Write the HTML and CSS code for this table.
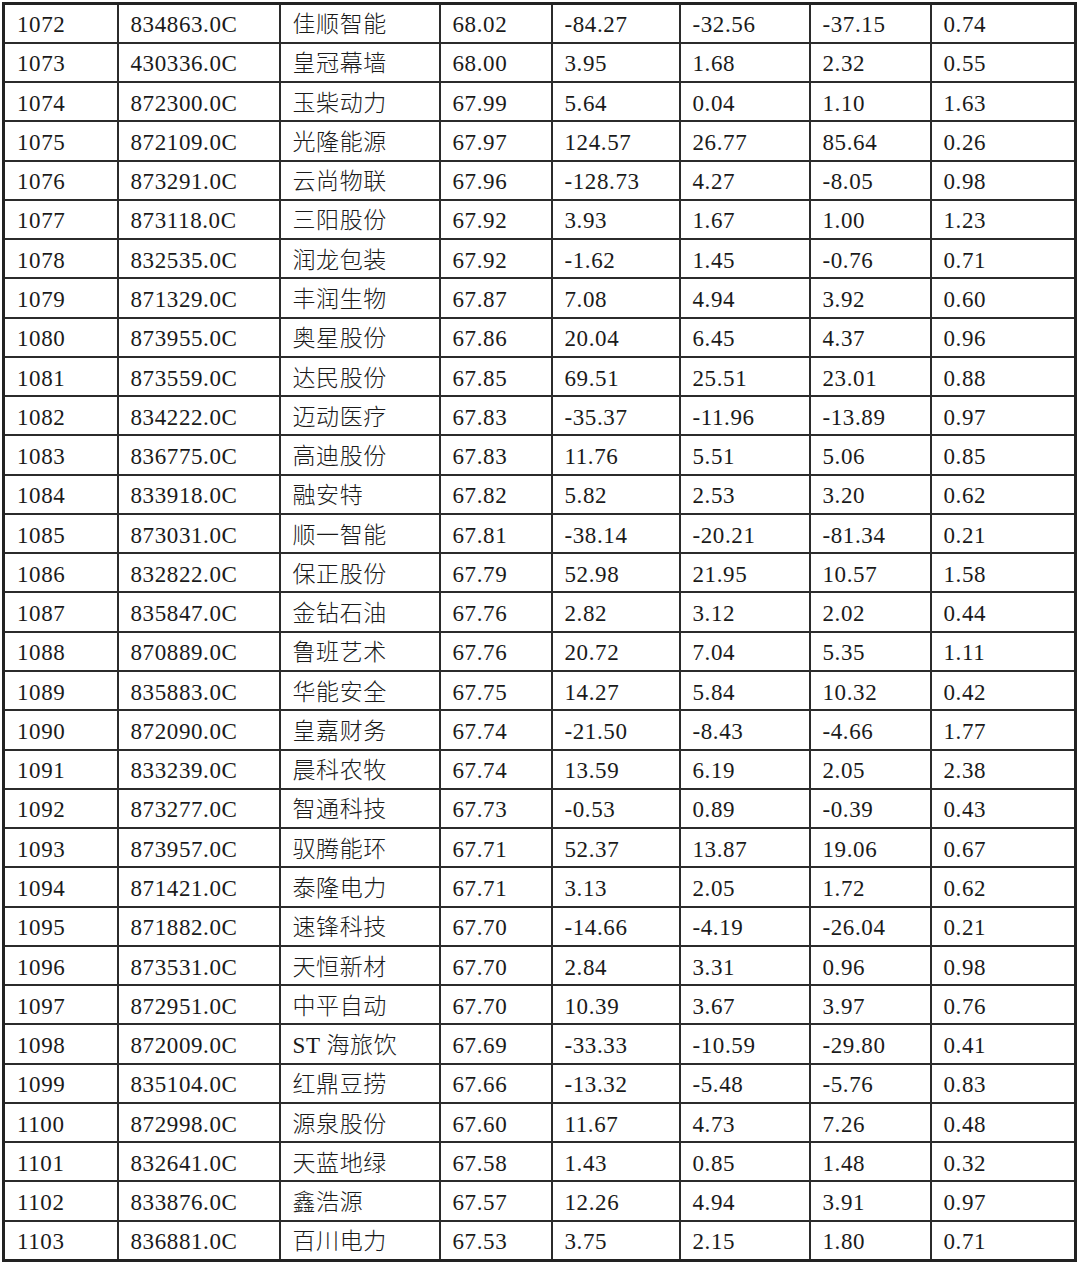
FILE: index.html
```html
<!DOCTYPE html>
<html lang="zh-CN">
<head>
<meta charset="utf-8">
<title>表格</title>
<link rel="stylesheet" href="styles.css">
</head>
<body>
<table class="grid">
<colgroup>
<col class="c-rank"><col class="c-code"><col class="c-name"><col class="c-score"><col class="c-a"><col class="c-b"><col class="c-c"><col class="c-d">
</colgroup>
<tbody>
<tr><td>1072</td><td>834863.0C</td><td>佳顺智能</td><td>68.02</td><td>-84.27</td><td>-32.56</td><td>-37.15</td><td>0.74</td></tr>
<tr><td>1073</td><td>430336.0C</td><td>皇冠幕墙</td><td>68.00</td><td>3.95</td><td>1.68</td><td>2.32</td><td>0.55</td></tr>
<tr><td>1074</td><td>872300.0C</td><td>玉柴动力</td><td>67.99</td><td>5.64</td><td>0.04</td><td>1.10</td><td>1.63</td></tr>
<tr><td>1075</td><td>872109.0C</td><td>光隆能源</td><td>67.97</td><td>124.57</td><td>26.77</td><td>85.64</td><td>0.26</td></tr>
<tr><td>1076</td><td>873291.0C</td><td>云尚物联</td><td>67.96</td><td>-128.73</td><td>4.27</td><td>-8.05</td><td>0.98</td></tr>
<tr><td>1077</td><td>873118.0C</td><td>三阳股份</td><td>67.92</td><td>3.93</td><td>1.67</td><td>1.00</td><td>1.23</td></tr>
<tr><td>1078</td><td>832535.0C</td><td>润龙包装</td><td>67.92</td><td>-1.62</td><td>1.45</td><td>-0.76</td><td>0.71</td></tr>
<tr><td>1079</td><td>871329.0C</td><td>丰润生物</td><td>67.87</td><td>7.08</td><td>4.94</td><td>3.92</td><td>0.60</td></tr>
<tr><td>1080</td><td>873955.0C</td><td>奥星股份</td><td>67.86</td><td>20.04</td><td>6.45</td><td>4.37</td><td>0.96</td></tr>
<tr><td>1081</td><td>873559.0C</td><td>达民股份</td><td>67.85</td><td>69.51</td><td>25.51</td><td>23.01</td><td>0.88</td></tr>
<tr><td>1082</td><td>834222.0C</td><td>迈动医疗</td><td>67.83</td><td>-35.37</td><td>-11.96</td><td>-13.89</td><td>0.97</td></tr>
<tr><td>1083</td><td>836775.0C</td><td>高迪股份</td><td>67.83</td><td>11.76</td><td>5.51</td><td>5.06</td><td>0.85</td></tr>
<tr><td>1084</td><td>833918.0C</td><td>融安特</td><td>67.82</td><td>5.82</td><td>2.53</td><td>3.20</td><td>0.62</td></tr>
<tr><td>1085</td><td>873031.0C</td><td>顺一智能</td><td>67.81</td><td>-38.14</td><td>-20.21</td><td>-81.34</td><td>0.21</td></tr>
<tr><td>1086</td><td>832822.0C</td><td>保正股份</td><td>67.79</td><td>52.98</td><td>21.95</td><td>10.57</td><td>1.58</td></tr>
<tr><td>1087</td><td>835847.0C</td><td>金钻石油</td><td>67.76</td><td>2.82</td><td>3.12</td><td>2.02</td><td>0.44</td></tr>
<tr><td>1088</td><td>870889.0C</td><td>鲁班艺术</td><td>67.76</td><td>20.72</td><td>7.04</td><td>5.35</td><td>1.11</td></tr>
<tr><td>1089</td><td>835883.0C</td><td>华能安全</td><td>67.75</td><td>14.27</td><td>5.84</td><td>10.32</td><td>0.42</td></tr>
<tr><td>1090</td><td>872090.0C</td><td>皇嘉财务</td><td>67.74</td><td>-21.50</td><td>-8.43</td><td>-4.66</td><td>1.77</td></tr>
<tr><td>1091</td><td>833239.0C</td><td>晨科农牧</td><td>67.74</td><td>13.59</td><td>6.19</td><td>2.05</td><td>2.38</td></tr>
<tr><td>1092</td><td>873277.0C</td><td>智通科技</td><td>67.73</td><td>-0.53</td><td>0.89</td><td>-0.39</td><td>0.43</td></tr>
<tr><td>1093</td><td>873957.0C</td><td>驭腾能环</td><td>67.71</td><td>52.37</td><td>13.87</td><td>19.06</td><td>0.67</td></tr>
<tr><td>1094</td><td>871421.0C</td><td>泰隆电力</td><td>67.71</td><td>3.13</td><td>2.05</td><td>1.72</td><td>0.62</td></tr>
<tr><td>1095</td><td>871882.0C</td><td>速锋科技</td><td>67.70</td><td>-14.66</td><td>-4.19</td><td>-26.04</td><td>0.21</td></tr>
<tr><td>1096</td><td>873531.0C</td><td>天恒新材</td><td>67.70</td><td>2.84</td><td>3.31</td><td>0.96</td><td>0.98</td></tr>
<tr><td>1097</td><td>872951.0C</td><td>中平自动</td><td>67.70</td><td>10.39</td><td>3.67</td><td>3.97</td><td>0.76</td></tr>
<tr><td>1098</td><td>872009.0C</td><td>ST 海旅饮</td><td>67.69</td><td>-33.33</td><td>-10.59</td><td>-29.80</td><td>0.41</td></tr>
<tr><td>1099</td><td>835104.0C</td><td>红鼎豆捞</td><td>67.66</td><td>-13.32</td><td>-5.48</td><td>-5.76</td><td>0.83</td></tr>
<tr><td>1100</td><td>872998.0C</td><td>源泉股份</td><td>67.60</td><td>11.67</td><td>4.73</td><td>7.26</td><td>0.48</td></tr>
<tr><td>1101</td><td>832641.0C</td><td>天蓝地绿</td><td>67.58</td><td>1.43</td><td>0.85</td><td>1.48</td><td>0.32</td></tr>
<tr><td>1102</td><td>833876.0C</td><td>鑫浩源</td><td>67.57</td><td>12.26</td><td>4.94</td><td>3.91</td><td>0.97</td></tr>
<tr><td>1103</td><td>836881.0C</td><td>百川电力</td><td>67.53</td><td>3.75</td><td>2.15</td><td>1.80</td><td>0.71</td></tr>
</tbody>
</table>
</body>
</html>
```
FILE: styles.css
```css
html, body {
  margin: 0;
  padding: 0;
  background: #ffffff;
}
body {
  padding: 2px 0 0 2px;
}
.grid {
  border-collapse: collapse;
  table-layout: fixed;
  width: 1075px;
  border: 3px solid #222222;
  font-family: "Liberation Serif", "Noto Sans CJK SC", serif;
  font-size: 23px;
  font-weight: 300;
  letter-spacing: 0.6px;
  color: #1a1a1a;
}
.c-rank { width: 114px; }
.c-code { width: 162px; }
.c-name { width: 160px; }
.c-score { width: 112px; }
.c-a { width: 128px; }
.c-b { width: 130px; }
.c-c { width: 121px; }
.c-d { width: 145px; }
.grid tr {
  height: 39.28px;
}
.grid td {
  border: 2px solid #2b2b2b;
  padding: 3px 4px 0 12px;
  line-height: 1;
  white-space: nowrap;
  overflow: hidden;
  vertical-align: middle;
}
```
